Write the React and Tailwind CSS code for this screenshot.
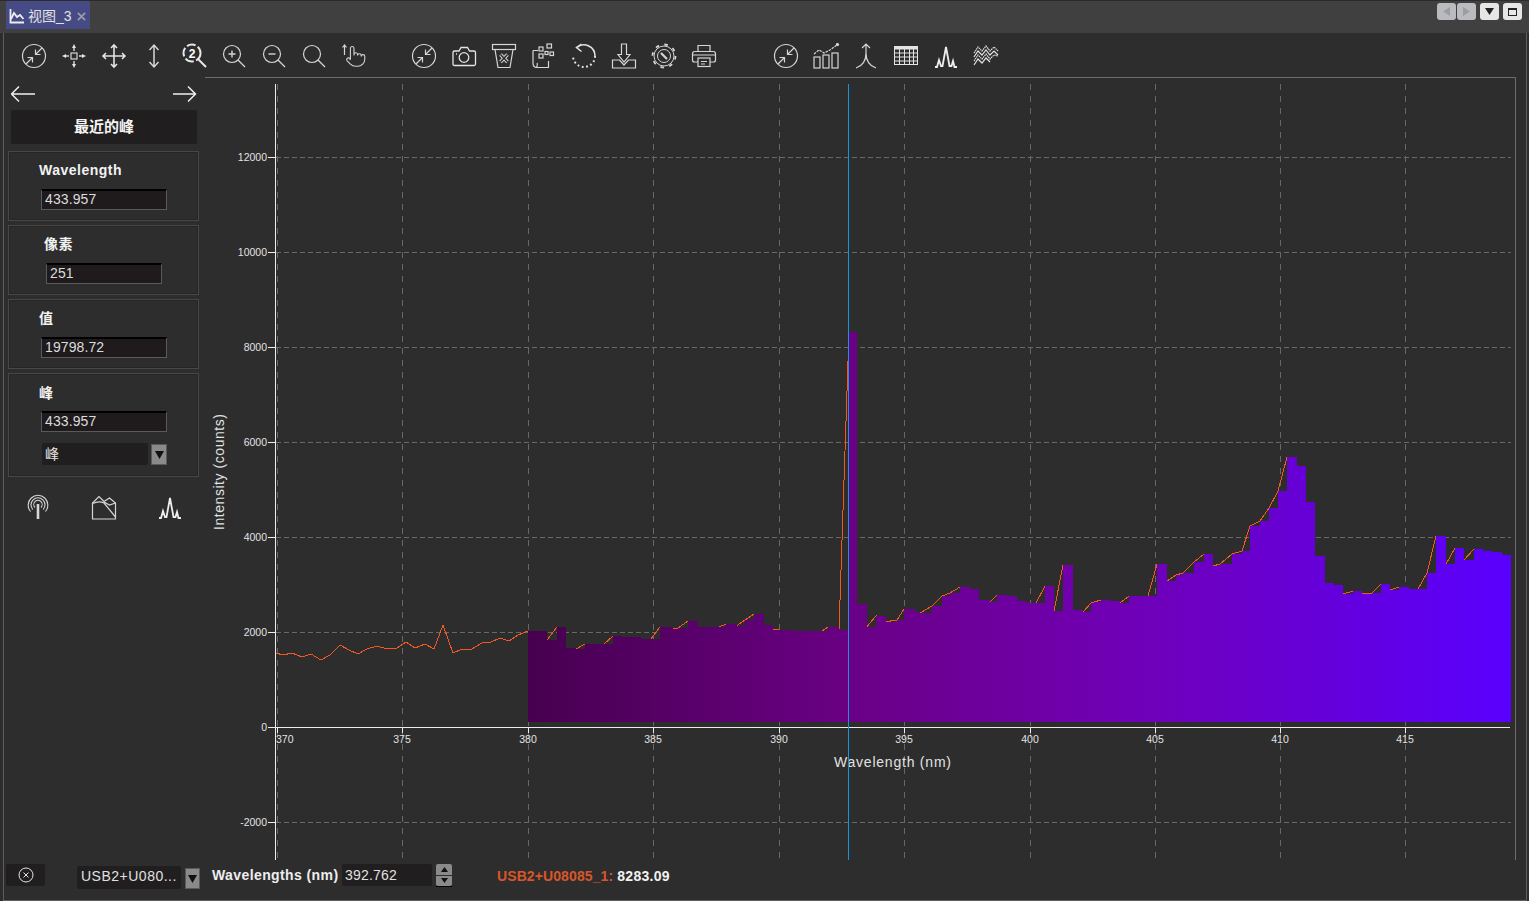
const LINE_START = [
  [276, 653], [283, 655], [292, 653], [302, 657], [311, 654], [321, 660], [330, 655], [340, 645],
  [349, 650], [358, 654], [367, 649], [377, 646], [387, 649], [397, 648], [406, 642], [415, 648],
  [425, 644], [434, 649], [443, 625], [453, 653], [462, 649], [472, 649], [482, 643], [491, 642],
  [500, 638], [509, 641], [518, 635],
];

// left edge and top of every bar, read off the picture
const BARS = [
  [528, 631], [538, 631], [547, 640], [557, 627], [566, 648], [576, 649], [585, 644], [604, 644], [613, 636], [622, 637],
  [641, 639], [651, 639], [660, 627], [673, 628.5], [678, 628], [688, 621], [698, 627], [719, 627], [726, 624],
  [737, 625.5], [745, 620], [754, 614], [764, 625], [773, 629.5], [792, 631], [822, 631], [828, 627],
  [839, 630], [849, 332], [857, 604], [867, 626.7], [876, 615.7], [886, 621.7], [897, 620], [904, 609],
  [915, 612], [920, 613], [932, 606], [942, 596], [950, 593], [960, 587], [970, 589], [979, 600],
  [990, 602], [997, 595], [1007, 596], [1017, 601], [1026, 603], [1036, 603], [1045, 586], [1054, 611], [1063, 565],
  [1073, 610], [1083, 612], [1091, 603], [1094, 602], [1101, 600], [1110, 601], [1120, 603], [1129, 596],
  [1148, 596], [1157, 564], [1167, 581], [1176, 575], [1183, 573], [1194, 562], [1204, 554], [1213, 566], [1220, 564],
  [1232, 554], [1242, 551], [1250, 526], [1260, 521], [1269, 508], [1278, 491], [1287, 457], [1297, 466],
  [1306, 502], [1315, 556], [1325, 583], [1334, 585], [1343, 594], [1353, 591], [1362, 594], [1372, 593],
  [1381, 584], [1390, 590], [1399, 587], [1409, 589], [1418, 589], [1427, 573], [1436, 536], [1446, 564], [1455, 548],
  [1464, 560], [1474, 549], [1483, 551], [1492, 552], [1502, 555],
];

const BAR_END = 1511;
const BAR_BOTTOM = 722;

const barPath =
  `M${BARS[0][0]} ${BAR_BOTTOM} ` +
  BARS.map(([x, y], i) => `L${x} ${y} L${i + 1 < BARS.length ? BARS[i + 1][0] : BAR_END} ${y}`).join(' ') +
  ` L${BAR_END} ${BAR_BOTTOM} Z`;

const linePoints = [...LINE_START, ...BARS, [BAR_END, 555]].map(([x, y]) => `${x},${y}`).join(' ');

const Y_TICKS = [
  [157, '12000'], [252, '10000'], [347, '8000'], [442, '6000'], [537, '4000'], [632, '2000'], [727, '0'], [822, '-2000'],
];
const X_TICKS = [
  [277, '370'], [402, '375'], [528, '380'], [653, '385'], [779, '390'], [904, '395'],
  [1030, '400'], [1155, '405'], [1280, '410'], [1405, '415'],
];

function Ico({ children, sw = 1.2, color = '#d6d6d6' }) {
  return (
    <svg width="28" height="28" viewBox="0 0 28 28" fill="none" stroke={color} strokeWidth={sw}>
      {children}
    </svg>
  );
}

const FitIcon = () => (
  <Ico>
    <circle cx="14" cy="14" r="11.5" />
    <path d="M22 6L15.5 12.5M15.5 7.5V12.5H20.5M6 22L12.5 15.5M7.5 15.5H12.5V20.5" />
  </Ico>
);
const CenterIcon = () => (
  <Ico>
    <rect x="11" y="11" width="6" height="6" />
    <path d="M14 5V9M14 19V23M5 14H9M19 14H23" strokeWidth="1.4" />
    <path d="M14 2L16 6H12ZM14 26L16 22H12ZM2 14L6 12V16ZM26 14L22 12V16Z" fill="#e4e4e4" stroke="none" />
  </Ico>
);
const MoveIcon = () => (
  <Ico sw={1.6} color="#e4e4e4">
    <path d="M14 3V25M3 14H25M11 6L14 3L17 6M11 22L14 25L17 22M6 11L3 14L6 17M22 11L25 14L22 17" />
  </Ico>
);
const VerticalIcon = () => (
  <Ico sw={1.5}>
    <path d="M14 3V25M9.5 8L14 3L18.500 8M9.5 20L14 25L18.500 20" />
  </Ico>
);
const Zoom2Icon = () => (
  <Ico sw={2} color="#e8e8e8">
    <circle cx="12" cy="11" r="8.500" strokeDasharray="9 2.500" />
    <path d="M18 17L26 25" />
    <text x="12" y="15.500" textAnchor="middle" fontSize="12" fontWeight="700" fill="#fff" stroke="none" fontFamily="Liberation Sans">2</text>
  </Ico>
);
const ZoomIcon = ({ mark }) => (
  <Ico>
    <circle cx="12" cy="12" r="8.500" />
    <path d="M18 18L25 25" />
    {mark === 'plus' && <path d="M8.500 12H15.500M12 8.500V15.500" strokeWidth="1.400" />}
    {mark === 'minus' && <path d="M8.500 12H15.500" strokeWidth="1.400" />}
  </Ico>
);
const HandIcon = () => (
  <Ico>
    <path d="M4.500 13V3M2.500 5.500L4.500 3L6.500 5.500" />
    <g transform="translate(5 4.500) scale(0.9)">
      <path d="M22 14a8 8 0 0 1-8 8M18 11v-1a2 2 0 0 0-2-2a2 2 0 0 0-2 2M14 10V9a2 2 0 0 0-2-2a2 2 0 0 0-2 2v1M10 9.500V2a2 2 0 0 0-2-2a2 2 0 0 0-2 2v12M18 11a2 2 0 1 1 4 0v3a8 8 0 0 1-8 8h-2c-2.800 0-4.500-.860-5.990-2.340l-3.600-3.600a2 2 0 0 1 2.830-2.820L6 15" />
    </g>
  </Ico>
);
const CameraIcon = () => (
  <Ico sw={1.300} color="#e4e4e4">
    <path d="M3 10.500C3 9.500 3.500 9 4.500 9H9L11 5.500H17.500L19.500 9H24C25 9 25.500 9.500 25.500 10.500V22C25.500 23 25 23.500 24 23.500H4.500C3.500 23.500 3 23 3 22Z" />
    <circle cx="14" cy="15.500" r="4.800" />
    <path d="M6 12H7" />
  </Ico>
);
const TrashIcon = () => (
  <Ico>
    <rect x="2.500" y="2.500" width="23" height="5" />
    <path d="M5 7.500L8 25.500H20L23 7.500" />
    <path d="M10.500 12.500L17.500 20M17.500 12.500L10.500 20" strokeWidth="3.600" />
    <path d="M10.500 12.500L17.500 20M17.500 12.500L10.500 20" strokeWidth="1.600" stroke="#2d2d2d" />
  </Ico>
);
const SheetIcon = () => (
  <Ico>
    <path d="M3 8.500H8M3 8.500V21C3 23.500 4 25 6 25.500H18.500V19M6 25.500C7.500 24.500 7.500 22 7 21" />
    <rect x="9" y="5" width="4" height="4" />
    <rect x="17" y="2" width="4.500" height="4" />
    <rect x="9" y="12" width="4" height="4" />
    <rect x="20" y="10" width="3.500" height="3.500" />
    <rect x="15" y="9.500" width="3" height="3" />
  </Ico>
);
const RotateIcon = () => (
  <Ico sw={1.500} color="#e4e4e4">
    <path d="M7 5.500A11 11 0 0 1 25 14" />
    <path d="M25 14A11 11 0 1 1 3 14" strokeDasharray="1.800 2.600" strokeWidth="2" />
    <path d="M11.500 2L6.500 5.500L11.500 9.500" />
  </Ico>
);
const ExportIcon = () => (
  <Ico>
    <path d="M11.500 2H16.500V12.500H20L14 20L8 12.500H11.500Z" />
    <path d="M2.500 18H9.500L14 23L18.500 18H25.500V26H2.500Z" />
  </Ico>
);
const GearIcon = () => (
  <Ico sw={1}>
    <circle cx="14" cy="14" r="11.500" strokeWidth="1.800" strokeDasharray="3.500 5.530" />
    <circle cx="14" cy="14" r="10" />
    <circle cx="14" cy="14" r="6.500" />
    <path d="M11 11L17 17" strokeWidth="2.200" />
  </Ico>
);
const PrinterIcon = () => (
  <Ico>
    <path d="M8 9.500V3.500H20V9.500" />
    <path d="M8 20H4.500C3 20 2.500 19.500 2.500 18V12C2.500 10.500 3 9.500 4.500 9.500H23.500C25 9.500 25.500 10.500 25.500 12V18C25.500 19.500 25 20 23.500 20H20" />
    <rect x="8" y="16" width="12" height="8.500" />
    <path d="M3 13H25M11 19.500H17M11 22H15" />
  </Ico>
);
const ChartUpIcon = () => (
  <Ico>
    <rect x="2" y="15" width="6" height="11" />
    <rect x="11" y="13" width="6" height="13" />
    <rect x="20" y="11" width="6" height="15" />
    <path d="M2 12L7 8L12 11L18 8L25 3" strokeDasharray="2.500 1" />
    <circle cx="25.500" cy="2.500" r="1" fill="#d6d6d6" />
  </Ico>
);
const LambdaIcon = () => (
  <Ico>
    <path d="M14 2V11C14 19 10 24 4 26M14 11C14 19 18 24 24 26M10 6L14 2L18 6" />
  </Ico>
);
const TableIcon = () => (
  <Ico sw={1} color="#e4e4e4">
    <rect x="2.500" y="4.500" width="23" height="18" />
    <rect x="2.500" y="4.500" width="23" height="2.500" fill="#e4e4e4" />
    <path d="M2.500 11H25.500M2.500 15H25.500M2.500 19H25.500M7.500 7V22.500M12.500 7V22.500M17.500 7V22.500M21.500 7V22.500" />
  </Ico>
);
const PeaksIcon = () => (
  <Ico sw={1.800} color="#eeeeee">
    <path d="M3 25H5L7 18L9 24H10.500L14 5L17.500 24H19.500L21 19L22.500 25H25" />
  </Ico>
);
const WavesIcon = () => (
  <Ico sw={1.200} color="#e4e4e4">
    <path d="M2 11L6 5L10 9L14 4L18 9L22 5L26 9" strokeDasharray="1.500 .6" />
    <path d="M2 15L6 9L10 13L14 8L18 13L22 9L26 13" />
    <path d="M2 19L6 13L10 17L14 12L18 17L22 13L26 14" strokeDasharray="1.500 .6" />
    <path d="M2 23L6 17L10 21L14 16L18 20" />
  </Ico>
);
const AntennaIcon = () => (
  <Ico sw={1.100}>
    <path d="M6.600 18.500A9.800 9.800 0 1 1 21.400 18.500M8.800 16.500A7 7 0 1 1 19.200 16.500M11 14.500A4.200 4.200 0 1 1 17 14.500" />
    <path d="M14 11V26" strokeWidth="2.600" />
  </Ico>
);
const MountainIcon = () => (
  <Ico>
    <path d="M2.500 26V10L9 3.500L14 8.500L19.500 5L25.500 10V26Z" />
    <path d="M2.500 10.500C7 8.500 11 8.500 14 10L25.500 24M14 9L19.500 12L25.500 10" />
  </Ico>
);

const GROUP_1 = [
  <FitIcon key="a" />, <CenterIcon key="b" />, <MoveIcon key="c" />, <VerticalIcon key="d" />, <Zoom2Icon key="e" />,
  <ZoomIcon key="f" mark="plus" />, <ZoomIcon key="g" mark="minus" />, <ZoomIcon key="h" />, <HandIcon key="i" />,
];
const GROUP_2 = [
  <FitIcon key="a" />, <CameraIcon key="b" />, <TrashIcon key="c" />, <SheetIcon key="d" />,
  <RotateIcon key="e" />, <ExportIcon key="f" />, <GearIcon key="g" />, <PrinterIcon key="h" />,
];
const GROUP_3 = [
  <FitIcon key="a" />, <ChartUpIcon key="b" />, <LambdaIcon key="c" />, <TableIcon key="d" />,
  <PeaksIcon key="e" />, <WavesIcon key="f" />,
];

function ToolGroup({ icons, className = '' }) {
  return (
    <div className={`flex ${className}`}>
      {icons.map((icon, i) => (
        <div key={i} className="w-10 h-10 flex items-center justify-center">{icon}</div>
      ))}
    </div>
  );
}

function WinButton({ children, light }) {
  return (
    <div className={`w-[19px] h-[17px] rounded-[3px] flex items-center justify-center ${light ? 'bg-[#b9bbbf]' : 'bg-[#e6e6e6]'}`}>
      {children}
    </div>
  );
}

function ValueBox({ value, className = '' }) {
  return (
    <div className={`h-[21px] bg-[#1f1b1c] border border-[#5a5a5a] border-t-2 border-t-black pl-[3px] text-[14px] tracking-[0.1px] leading-[16px] text-[#dcdcdc] ${className}`}>
      {value}
    </div>
  );
}

function Card({ label, value, inset = 32, width = 126, tall, children }) {
  return (
    <div className={`w-[191px] border border-[#474747] shadow-[inset_0_0_0_1px_#262626] ${tall ? 'h-[104px]' : 'h-[70px]'}`}>
      <div className={`h-[37px] ${tall ? 'pt-[10px]' : 'pt-[9px]'}`} style={{ paddingLeft: inset - 2 }}>
        <div className="h-[18px] leading-[18px] text-[14px] font-bold tracking-[0.5px] text-[#f2f2f2]">{label}</div>
      </div>
      <div style={{ marginLeft: inset, width }}>
        <ValueBox value={value} />
      </div>
      {children}
    </div>
  );
}

function DropArrow({ className = '' }) {
  return (
    <div className={`bg-[#8a8a8a] border border-[#5a5a5a] flex items-center justify-center ${className}`}>
      <svg width="9" height="8" viewBox="0 0 9 8"><path d="M0 0H9L4.500 8Z" fill="#111" /></svg>
    </div>
  );
}

function Chart() {
  return (
    <svg width="1321" height="784" viewBox="205 76 1321 784" className="block font-['Liberation_Sans',sans-serif]">
      <defs>
        <linearGradient id="spectrum" gradientUnits="userSpaceOnUse" x1="528" y1="0" x2="1511" y2="0">
          <stop offset="0" stopColor="#47004f" />
          <stop offset="0.33" stopColor="#6a0085" />
          <stop offset="0.6" stopColor="#7000b4" />
          <stop offset="0.8" stopColor="#6600d8" />
          <stop offset="1" stopColor="#5a00ff" />
        </linearGradient>
      </defs>

      <path d="M205 77.500H1515.500V860" stroke="#6e6e6e" fill="none" />

      {Y_TICKS.filter(([y]) => y !== 727).map(([y]) => (
        <line key={y} x1="276" x2="1511" y1={y + 0.5} y2={y + 0.5} stroke="#686868" strokeDasharray="5 3" />
      ))}
      {X_TICKS.map(([x]) => (
        <line key={x} x1={x + 0.5} x2={x + 0.5} y1="84" y2="860" stroke="#686868" strokeDasharray="6 6" />
      ))}

      <polyline points={linePoints} fill="none" stroke="#f05a22" strokeWidth="1" shapeRendering="crispEdges" />
      <path d="M275.500 84V860M268 727.500H1510" stroke="#ececec" fill="none" />
      <path d={barPath} fill="url(#spectrum)" shapeRendering="crispEdges" />

      {Y_TICKS.map(([y, label]) => (
        <g key={label}>
          <line x1="268" x2="276" y1={y + 0.5} y2={y + 0.5} stroke="#ececec" />
          <text x="267" y={y + 4} textAnchor="end" fontSize="10.500" fill="#e2e2e2">{label}</text>
        </g>
      ))}
      {X_TICKS.map(([x, label], i) => (
        <g key={label}>
          <line x1={x + 0.5} x2={x + 0.5} y1="727" y2="733" stroke="#ececec" />
          <text x={i === 0 ? 276 : x} y="743" textAnchor={i === 0 ? 'start' : 'middle'} fontSize="10.500" fill="#e2e2e2">{label}</text>
        </g>
      ))}

      <text x="834" y="767" fontSize="14" fill="#e2e2e2" textLength="117">Wavelength (nm)</text>
      <text transform="translate(224 530) rotate(-90)" fontSize="14" fill="#e2e2e2" textLength="116">Intensity (counts)</text>

      <line x1="848.500" x2="848.500" y1="84" y2="860" stroke="#1c92d8" />
    </svg>
  );
}

export default function App() {
  return (
    <div className="w-[1529px] h-[901px] overflow-hidden bg-[#2d2d2d] flex flex-col font-['Liberation_Sans','Noto_Sans_CJK_SC',sans-serif]">
      {/* tab strip */}
      <div className="h-[33px] shrink-0 bg-[#404040] border-t border-[#2b2b2b] flex items-start justify-between pl-[6px] pr-[7px]">
        <div className="w-[84px] h-[28px] bg-[#464b85] rounded-t-[2px] flex items-center pl-[3px] pt-[2px] text-[14px] text-[#e2e2e2]">
          <svg width="16" height="16" viewBox="0 0 16 16" fill="none" stroke="#eeeeee" strokeWidth="1.800">
            <path d="M1.500 1V14.500H15" />
            <path d="M2 11L5 5L8 9L11 7L14.500 11" />
          </svg>
          <span className="ml-[3px]">视图_3</span>
          <svg width="9" height="9" viewBox="0 0 10 10" className="ml-[5px]" stroke="#9a9aa8" strokeWidth="2">
            <path d="M1 1L9 9M9 1L1 9" />
          </svg>
        </div>
        <div className="flex items-center mt-[2px]">
          <WinButton light>
            <svg width="7" height="9" viewBox="0 0 7 9"><path d="M7 0V9L0 4.500Z" fill="#9b9da1" /></svg>
          </WinButton>
          <div className="ml-[1px]">
            <WinButton light>
              <svg width="7" height="9" viewBox="0 0 7 9"><path d="M0 0V9L7 4.500Z" fill="#9b9da1" /></svg>
            </WinButton>
          </div>
          <div className="ml-[4px]">
            <WinButton>
              <svg width="9" height="7" viewBox="0 0 9 7"><path d="M0 0H9L4.500 7Z" fill="#222" /></svg>
            </WinButton>
          </div>
          <div className="ml-[4px]">
            <WinButton>
              <div className="w-[9px] h-[8px] border border-[#222] border-t-2" />
            </WinButton>
          </div>
        </div>
      </div>

      <div className="flex-1 min-h-0 ml-[3px] mr-[2px] border-x border-b border-[#5e5e5e] flex flex-col">
        {/* toolbar */}
        <div className="h-[43px] shrink-0 flex pt-[3px] pl-[10px]">
          <ToolGroup icons={GROUP_1} />
          <ToolGroup icons={GROUP_2} className="ml-[30px]" />
          <ToolGroup icons={GROUP_3} className="ml-[42px]" />
        </div>

        <div className="flex-1 min-h-0 flex">
          {/* side panel */}
          <div className="w-[201px] shrink-0 flex flex-col pl-[4px]">
            <div className="ml-[3px] w-[186px] mt-[6px] h-6 flex items-center justify-between">
              <svg width="25" height="18" viewBox="0 0 25 18" fill="none" stroke="#f0f0f0" strokeWidth="1.500"><path d="M24 9H0.500M8 1.500L0.500 9L8 16.500" /></svg>
              <svg width="25" height="18" viewBox="0 0 25 18" fill="none" stroke="#f0f0f0" strokeWidth="1.500"><path d="M1 9H23.500M16 1.500L23.500 9L16 16.500" /></svg>
            </div>
            <div className="ml-[3px] w-[186px] mt-[4px] h-[34px] bg-[#201e1f] rounded-[2px] flex items-center justify-center text-[15px] font-bold text-[#f5f5f5]">
              最近的峰
            </div>
            <div className="mt-[7px] flex flex-col gap-[4px]">
              <Card label="Wavelength" value="433.957" />
              <Card label="像素" value="251" inset={37} width={116} />
              <Card label="值" value="19798.72" />
              <Card label="峰" value="433.957" tall>
                <div className="ml-[33px] mt-[11px] flex items-start">
                  <div className="w-[106px] h-[22px] bg-[#201e1f] rounded-[2px] pl-[3px] text-[14px] leading-[22px] text-[#e6e6e6]">峰</div>
                  <DropArrow className="ml-[3px] mt-[1px] w-[16px] h-[21px]" />
                </div>
              </Card>
            </div>
            <div className="mt-[16px] pl-[16px] flex gap-[38px]">
              <AntennaIcon />
              <MountainIcon />
              <PeaksIcon />
            </div>
          </div>

          <Chart />
        </div>

        {/* bottom bar */}
        <div className="h-[40px] shrink-0 flex items-start pt-[4px] text-[14px] text-[#e0e0e0]">
          <div className="ml-[2px] w-[39px] h-[22px] bg-[#201e1f] rounded-[2px] flex items-center justify-center">
            <svg width="16" height="16" viewBox="0 0 16 16" fill="none" stroke="#e6e6e6"><circle cx="8" cy="8" r="7" /><path d="M5.500 5.500L10.500 10.500M10.500 5.500L5.500 10.500" /></svg>
          </div>
          <div className="ml-[32px] mt-[2px] w-[104px] h-[23px] bg-[#201e1f] rounded-[2px] pl-[4px] leading-[21px] tracking-[0.5px] whitespace-nowrap">USB2+U080...</div>
          <DropArrow className="ml-[4px] mt-[4px] w-[15px] h-[21px]" />
          <div className="ml-[12px] w-[130px] h-[22px] leading-[22px] font-bold tracking-[0.4px] text-[#eeeeee]">Wavelengths (nm)</div>
          <div className="w-[90px] h-[22px] bg-[#201e1f] rounded-[2px] pl-[3px] leading-[23px] tracking-[0.2px]">392.762</div>
          <div className="ml-[4px] w-[16px] h-[23px] flex flex-col gap-[1px] border-b border-black">
            <div className="flex-1 bg-[#8a8a8a] rounded-t-[2px] flex items-center justify-center">
              <svg width="7" height="5" viewBox="0 0 7 5"><path d="M0 5H7L3.500 0Z" fill="#111" /></svg>
            </div>
            <div className="flex-1 bg-[#8a8a8a] rounded-b-[2px] flex items-center justify-center">
              <svg width="7" height="5" viewBox="0 0 7 5"><path d="M0 0H7L3.500 5Z" fill="#111" /></svg>
            </div>
          </div>
          <div className="ml-[45px] h-[24px] leading-[24px] font-bold whitespace-nowrap tracking-[0.1px]">
            <span className="text-[#d9562a]">USB2+U08085_1:</span>
            <span className="ml-[4px] text-[#f2f2f2] tracking-[0.3px]">8283.09</span>
          </div>
        </div>
      </div>
    </div>
  );
}
